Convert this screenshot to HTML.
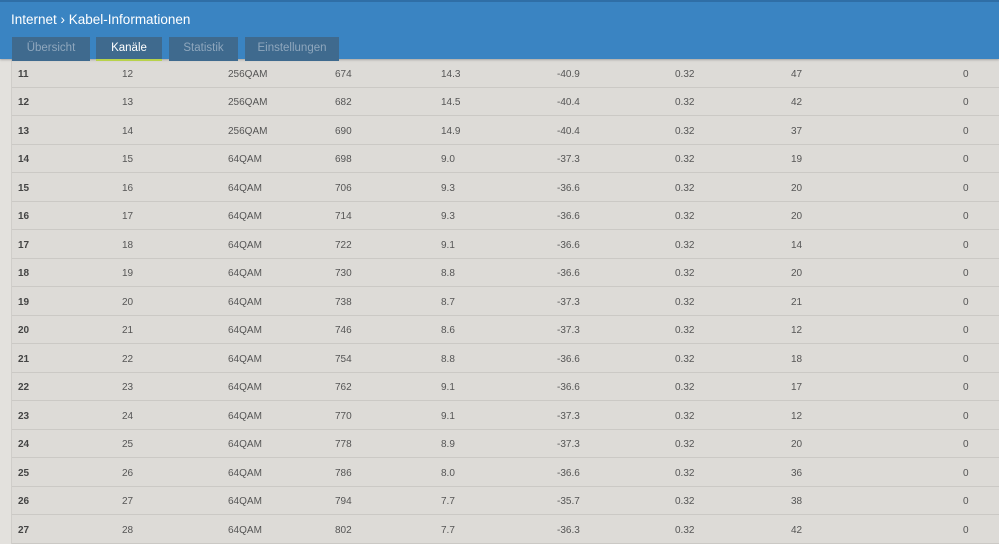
<!DOCTYPE html>
<html><head><meta charset="utf-8"><style>
body{margin:0;width:999px;height:544px;overflow:hidden;background:#dddbd7;font-family:"Liberation Sans",sans-serif;position:relative}
.hdr{position:absolute;left:0;top:0;width:999px;height:59px;background:#3a84c2;border-top:2px solid #2f6ea6;box-sizing:border-box;box-shadow:0 1px 2px rgba(0,0,0,.25);z-index:2}
.title{position:absolute;left:11px;top:10px;color:#fff;font-size:13.5px}
.tab{position:absolute;top:35px;height:24px;background:#3f6a8e;color:#8fa7bd;font-size:11.5px;text-align:center;line-height:23px}
.tab.a{color:#fff;border-bottom:2px solid #b8d24b;box-sizing:border-box}
.left{position:absolute;left:0;top:59px;width:11px;height:485px;background:#e3e1dd;border-right:1px solid #cfcdc9}
.row{position:absolute;left:12px;width:987px;height:28.5px;border-bottom:1px solid #cbc9c5;box-sizing:border-box;font-size:10px;color:#555}
.row span{position:absolute;top:9.5px}
.row span.b{font-weight:bold;color:#444}
</style></head><body>
<div class="hdr"><div class="title">Internet ›&nbsp;Kabel-Informationen</div>
<div class="tab" style="left:12px;width:78px">Übersicht</div>
<div class="tab a" style="left:96px;width:66px">Kanäle</div>
<div class="tab" style="left:169px;width:69px">Statistik</div>
<div class="tab" style="left:245px;width:94px">Einstellungen</div>
</div>
<div class="left"></div>
<div id="t"></div>
<script>
var d=[[11,12,"256QAM",674,"14.3","-40.9",47],[12,13,"256QAM",682,"14.5","-40.4",42],[13,14,"256QAM",690,"14.9","-40.4",37],[14,15,"64QAM",698,"9.0","-37.3",19],[15,16,"64QAM",706,"9.3","-36.6",20],[16,17,"64QAM",714,"9.3","-36.6",20],[17,18,"64QAM",722,"9.1","-36.6",14],[18,19,"64QAM",730,"8.8","-36.6",20],[19,20,"64QAM",738,"8.7","-37.3",21],[20,21,"64QAM",746,"8.6","-37.3",12],[21,22,"64QAM",754,"8.8","-36.6",18],[22,23,"64QAM",762,"9.1","-36.6",17],[23,24,"64QAM",770,"9.1","-37.3",12],[24,25,"64QAM",778,"8.9","-37.3",20],[25,26,"64QAM",786,"8.0","-36.6",36],[26,27,"64QAM",794,"7.7","-35.7",38],[27,28,"64QAM",802,"7.7","-36.3",42]];
var xs=[18,122,228,335,441,557,675,791,963],h="";
d.forEach(function(r,i){var v=[r[0],r[1],r[2],r[3],r[4],r[5],"0.32",r[6],0];h+='<div class="row" style="top:'+(59+i*28.5)+'px">';v.forEach(function(c,j){h+='<span'+(j==0?' class="b"':'')+' style="left:'+(xs[j]-12)+'px">'+c+'</span>'});h+='</div>'});
document.getElementById('t').innerHTML=h;
</script>
</body></html>
